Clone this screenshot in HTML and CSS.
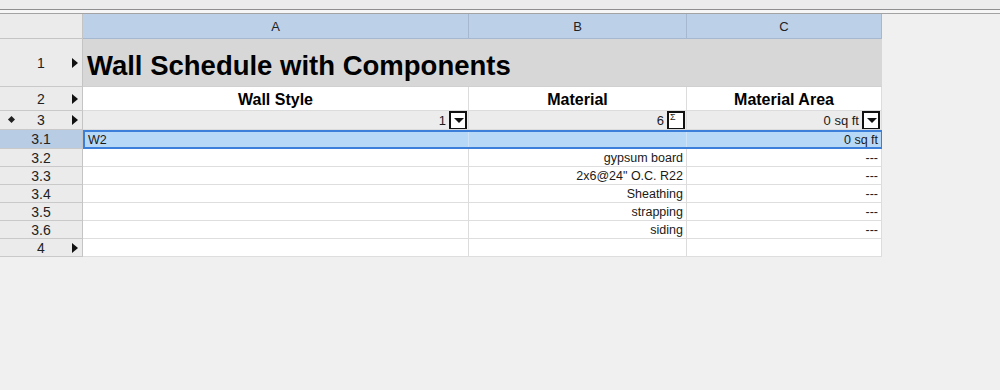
FILE: index.html
```html
<!DOCTYPE html>
<html lang="en">
<head>
  <meta charset="UTF-8">
  <title>Wall Schedule with Components</title>
  <link rel="stylesheet" href="styles.css">
</head>
<body>
  <div class="topbar"></div>
  <div class="rule"></div>

  <div class="sheet">
    <div class="row colheads">
      <div class="corner"></div>
      <div class="colhead">A</div>
      <div class="colhead">B</div>
      <div class="colhead">C</div>
    </div>

    <div class="row title-row">
      <div class="rowhead">1 <span class="arrow"></span></div>
      <div class="cell title">Wall Schedule with Components</div>
    </div>

    <div class="row header-row">
      <div class="rowhead">2 <span class="arrow"></span></div>
      <div class="cell head">Wall Style</div>
      <div class="cell head">Material</div>
      <div class="cell head">Material Area</div>
    </div>

    <div class="row summary-row">
      <div class="rowhead"><span class="diamond"></span>3 <span class="arrow"></span></div>
      <div class="cell num">1 <span class="ctl drop"></span></div>
      <div class="cell num">6 <span class="ctl sigma">&Sigma;</span></div>
      <div class="cell num">0 sq ft <span class="ctl drop"></span></div>
    </div>

    <div class="row sel-row">
      <div class="rowhead sel">3.1</div>
      <div class="band">
        <div class="cell">W2</div>
        <div class="cell"></div>
        <div class="cell num">0 sq ft</div>
      </div>
    </div>

    <div class="row data-row">
      <div class="rowhead">3.2</div>
      <div class="cell"></div>
      <div class="cell num">gypsum board</div>
      <div class="cell num">---</div>
    </div>
    <div class="row data-row">
      <div class="rowhead">3.3</div>
      <div class="cell"></div>
      <div class="cell num">2x6@24" O.C. R22</div>
      <div class="cell num">---</div>
    </div>
    <div class="row data-row">
      <div class="rowhead">3.4</div>
      <div class="cell"></div>
      <div class="cell num">Sheathing</div>
      <div class="cell num">---</div>
    </div>
    <div class="row data-row">
      <div class="rowhead">3.5</div>
      <div class="cell"></div>
      <div class="cell num">strapping</div>
      <div class="cell num">---</div>
    </div>
    <div class="row data-row">
      <div class="rowhead">3.6</div>
      <div class="cell"></div>
      <div class="cell num">siding</div>
      <div class="cell num">---</div>
    </div>
    <div class="row data-row">
      <div class="rowhead">4 <span class="arrow"></span></div>
      <div class="cell"></div>
      <div class="cell"></div>
      <div class="cell"></div>
    </div>
  </div>
</body>
</html>
```

FILE: styles.css
```css
* {
  box-sizing: border-box;
}
body {
  margin: 0;
  background: #f0f0f0;
  font-family: "Liberation Sans", Arial, sans-serif;
  color: #111;
}
.topbar {
  height: 10px;
  background: #ececec;
  border-bottom: 1px solid #8f8f8f;
}
.rule {
  height: 4px;
  background: #f6f6f6;
  border-bottom: 1px solid #a3a3a3;
}
.sheet {
  width: 882px;
}
.row {
  display: grid;
  grid-template-columns: 83px 386px 218px 195px;
}
.corner {
  background: #ebebeb;
  border-right: 1px solid #c4c4c4;
  border-bottom: 1px solid #c4c4c4;
}
.colhead {
  height: 25px;
  background: #bcd0e8;
  border-right: 1px solid #a6b8d0;
  border-bottom: 1px solid #a6b8d0;
  display: flex;
  align-items: center;
  justify-content: center;
  font-size: 13px;
  color: #222;
}
.rowhead {
  position: relative;
  background: #ebebeb;
  border-right: 1px solid #c4c4c4;
  border-bottom: 1px solid #c9c9c9;
  display: flex;
  align-items: center;
  justify-content: center;
  font-size: 14px;
  color: #222;
}
.rowhead.sel {
  background: #b8cce4;
}
.arrow {
  position: absolute;
  right: 4px;
  top: 50%;
  margin-top: -5px;
  border-left: 6px solid #111;
  border-top: 5px solid transparent;
  border-bottom: 5px solid transparent;
}
.diamond {
  position: absolute;
  left: 9px;
  top: 50%;
  width: 5px;
  height: 5px;
  margin-top: -3px;
  background: #222;
  transform: rotate(45deg);
}
.cell {
  background: #fff;
  border-right: 1px solid #dcdcdc;
  border-bottom: 1px solid #dcdcdc;
  display: flex;
  align-items: center;
  padding: 0 3px;
  font-size: 12.5px;
  color: #1a1a1a;
  overflow: hidden;
  white-space: nowrap;
}
.cell.num {
  justify-content: flex-end;
}
.title-row > * {
  height: 48px;
}
.title {
  grid-column: 2 / 5;
  background: #d7d7d7;
  border-right-color: #d7d7d7;
  border-bottom-color: #d0d0d0;
  font-size: 27.5px;
  font-weight: bold;
  color: #000;
  padding: 6px 0 0 4px;
}
.header-row > * {
  height: 24px;
}
.head {
  justify-content: center;
  font-size: 16px;
  font-weight: bold;
  color: #000;
  padding-top: 2px;
}
.summary-row > * {
  height: 19px;
}
.summary-row .cell {
  background: #ececec;
  font-size: 13px;
  padding-right: 1px;
}
.ctl {
  width: 18px;
  height: 19px;
  margin-left: 3px;
  background: #fff;
  border: 2px solid #111;
  position: relative;
}
.ctl.drop::after {
  content: "";
  position: absolute;
  left: 3px;
  top: 5px;
  border-top: 5px solid #111;
  border-left: 5px solid transparent;
  border-right: 5px solid transparent;
}
.ctl.sigma {
  font-size: 9px;
  line-height: 9px;
  padding-left: 1px;
}
.sel-row > * {
  height: 19px;
}
.band {
  grid-column: 2 / 5;
  display: grid;
  grid-template-columns: 384px 218px 194px;
  border: 2px solid #3b7fdb;
}
.band .cell {
  background: #b8d8f8;
  border-bottom: none;
  border-right: 1px solid #cfe3f8;
}
.band .cell:last-child {
  border-right: none;
}
.data-row > * {
  height: 18px;
}
.data-row .cell {
  border-bottom: 1px solid #dedede;
}
```
